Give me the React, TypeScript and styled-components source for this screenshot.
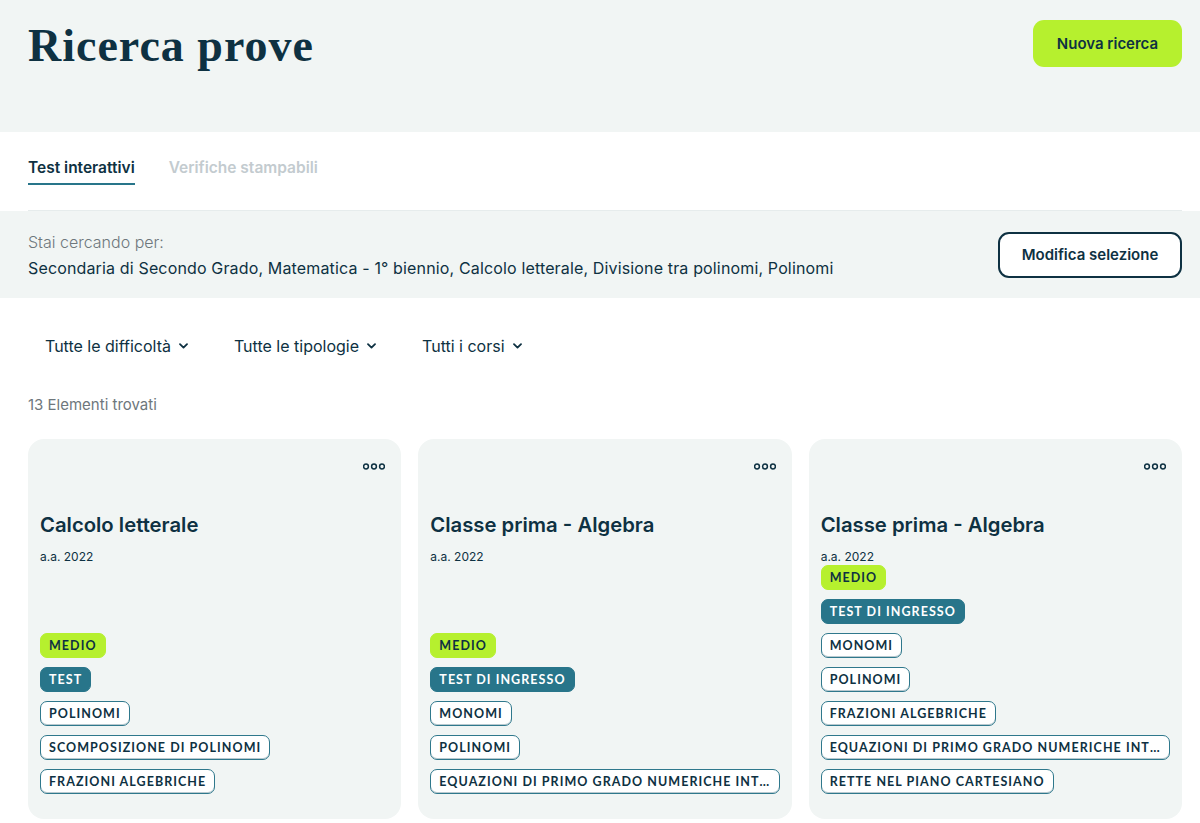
import React from "react";
import styled, { createGlobalStyle } from "styled-components";

const GlobalStyle = createGlobalStyle`
  * { box-sizing: border-box; }
  html, body { margin: 0; padding: 0; background: #ffffff; }
  body {
    font-family: "Inter", "Liberation Sans", sans-serif;
    color: #0e3142;
    -webkit-font-smoothing: antialiased;
  }
`;

const INK = "#0e3142";
const SOFT = "#f1f5f4";
const LIME = "#b6f02e";
const TEAL = "#28758a";

const Page = styled.div`
  width: 1200px;
  display: flex;
  flex-direction: column;
`;

const Header = styled.header`
  height: 132px;
  background: ${SOFT};
  padding: 20px 18px 0 28px;
  display: flex;
  justify-content: space-between;
  align-items: flex-start;
`;

const Title = styled.h1`
  margin: 0;
  padding-top: 1px;
  font-family: "Liberation Serif", "DejaVu Serif", serif;
  font-weight: 700;
  font-size: 46px;
  line-height: 50px;
  letter-spacing: 1px;
  color: ${INK};
`;

const PrimaryButton = styled.button`
  height: 47px;
  width: 149px;
  border: none;
  border-radius: 11px;
  background: ${LIME};
  color: ${INK};
  font-family: inherit;
  font-weight: 600;
  font-size: 15px;
  cursor: pointer;
`;

const TabsWrap = styled.div`
  padding: 0 18px 0 28px;
  background: #ffffff;
`;

const TabsRow = styled.nav`
  height: 79px;
  display: flex;
  align-items: flex-start;
  gap: 34px;
  padding-top: 26px;
  border-bottom: 1px solid #e6ecec;
`;

const Tab = styled.div<{ $active?: boolean }>`
  font-weight: 600;
  font-size: 15.5px;
  line-height: 20px;
  padding-bottom: 5px;
  color: ${(p) => (p.$active ? INK : "#c3cbcf")};
  border-bottom: 2px solid ${(p) => (p.$active ? TEAL : "transparent")};
`;

const SearchBar = styled.section`
  height: 87px;
  background: ${SOFT};
  padding: 0 18px 0 28px;
  display: flex;
  align-items: center;
  justify-content: space-between;
`;

const SearchText = styled.div`
  display: flex;
  flex-direction: column;
  gap: 6px;
  font-size: 16px;
  line-height: 20px;
`;

const SearchLabel = styled.span`
  color: #6e777c;
  font-weight: 300;
`;

const SearchValue = styled.span`
  color: ${INK};
  letter-spacing: 0.15px;
`;

const OutlineButton = styled.button`
  height: 46px;
  width: 184px;
  border: 2px solid ${INK};
  border-radius: 11px;
  background: #ffffff;
  color: ${INK};
  font-family: inherit;
  font-weight: 600;
  font-size: 15px;
  cursor: pointer;
`;

const Filters = styled.div`
  display: flex;
  gap: 12px;
  padding: 36px 18px 0 28px;
`;

const FilterButton = styled.button`
  display: flex;
  align-items: center;
  gap: 8px;
  padding: 0 17px;
  height: 24px;
  background: transparent;
  border: none;
  font-family: inherit;
  font-size: 16px;
  color: ${INK};
  cursor: pointer;
`;

const Count = styled.div`
  padding: 37px 28px 0;
  font-size: 15px;
  line-height: 20px;
  color: #6e777c;
`;

const Grid = styled.div`
  display: grid;
  grid-template-columns: repeat(3, 1fr);
  gap: 17px;
  padding: 24px 18px 0 28px;
`;

const Card = styled.article`
  background: ${SOFT};
  border-radius: 16px;
  padding: 20px 12px 25px;
  display: flex;
  flex-direction: column;
  min-width: 0;
`;

const CardTop = styled.div`
  display: flex;
  justify-content: flex-end;
  padding-right: 4px;
  height: 14px;
  align-items: center;
`;

const CardTitle = styled.h2`
  margin: 40px 0 0;
  font-size: 20.3px;
  line-height: 24px;
  font-weight: 600;
  color: ${INK};
`;

const Year = styled.div`
  margin-top: 12px;
  font-size: 12px;
  line-height: 16px;
  color: ${INK};
`;

const Tags = styled.div`
  margin-top: auto;
  display: flex;
  flex-direction: column;
  align-items: flex-start;
  gap: 9px;
`;

type TagKind = "level" | "type" | "topic";

const Tag = styled.span<{ $kind: TagKind }>`
  display: block;
  max-width: 100%;
  height: 25px;
  line-height: 23px;
  padding: 0 8px;
  border-radius: 7px;
  font-family: "Lato", "Liberation Sans", sans-serif;
  font-size: 12.5px;
  font-weight: 700;
  letter-spacing: 1.05px;
  text-transform: uppercase;
  white-space: nowrap;
  overflow: hidden;
  text-overflow: ellipsis;
  border: 1px solid
    ${(p) => (p.$kind === "level" ? LIME : p.$kind === "type" ? TEAL : "#2f788c")};
  background: ${(p) => (p.$kind === "level" ? LIME : p.$kind === "type" ? TEAL : "#ffffff")};
  color: ${(p) => (p.$kind === "type" ? "#ffffff" : INK)};
  box-shadow: ${(p) => (p.$kind === "topic" ? "inset 0 -1px 0 #b9c9cf" : "none")};
`;

const Dots = () => (
  <svg width="22" height="7" viewBox="0 0 22 7" fill="none">
    <circle cx="3" cy="3.5" r="2.4" stroke={INK} strokeWidth="1.5" />
    <circle cx="11" cy="3.5" r="2.4" stroke={INK} strokeWidth="1.5" />
    <circle cx="19" cy="3.5" r="2.4" stroke={INK} strokeWidth="1.5" />
  </svg>
);

const Chevron = () => (
  <svg width="9" height="6" viewBox="0 0 9 6" fill="none">
    <path d="M1 1.2 L4.5 4.6 L8 1.2" stroke={INK} strokeWidth="1.8" strokeLinecap="round" strokeLinejoin="round" />
  </svg>
);

type CardData = {
  title: string;
  level: string;
  type: string;
  topics: string[];
};

const cards: CardData[] = [
  {
    title: "Calcolo letterale",
    level: "Medio",
    type: "Test",
    topics: ["Polinomi", "Scomposizione di polinomi", "Frazioni algebriche"],
  },
  {
    title: "Classe prima - Algebra",
    level: "Medio",
    type: "Test di ingresso",
    topics: ["Monomi", "Polinomi", "Equazioni di primo grado numeriche intere"],
  },
  {
    title: "Classe prima - Algebra",
    level: "Medio",
    type: "Test di ingresso",
    topics: [
      "Monomi",
      "Polinomi",
      "Frazioni algebriche",
      "Equazioni di primo grado numeriche intere",
      "Rette nel piano cartesiano",
    ],
  },
];

export default function App() {
  return (
    <Page>
      <GlobalStyle />
      <Header>
        <Title>Ricerca prove</Title>
        <PrimaryButton>Nuova ricerca</PrimaryButton>
      </Header>
      <TabsWrap>
        <TabsRow>
          <Tab $active>Test interattivi</Tab>
          <Tab>Verifiche stampabili</Tab>
        </TabsRow>
      </TabsWrap>
      <SearchBar>
        <SearchText>
          <SearchLabel>Stai cercando per:</SearchLabel>
          <SearchValue>
            Secondaria di Secondo Grado, Matematica - 1° biennio, Calcolo letterale, Divisione tra polinomi, Polinomi
          </SearchValue>
        </SearchText>
        <OutlineButton>Modifica selezione</OutlineButton>
      </SearchBar>
      <Filters>
        <FilterButton>
          Tutte le difficoltà <Chevron />
        </FilterButton>
        <FilterButton>
          Tutte le tipologie <Chevron />
        </FilterButton>
        <FilterButton>
          Tutti i corsi <Chevron />
        </FilterButton>
      </Filters>
      <Count>13 Elementi trovati</Count>
      <Grid>
        {cards.map((c, i) => (
          <Card key={i}>
            <CardTop>
              <Dots />
            </CardTop>
            <CardTitle>{c.title}</CardTitle>
            <Year>a.a. 2022</Year>
            <Tags>
              <Tag $kind="level">{c.level}</Tag>
              <Tag $kind="type">{c.type}</Tag>
              {c.topics.map((t) => (
                <Tag key={t} $kind="topic">
                  {t}
                </Tag>
              ))}
            </Tags>
          </Card>
        ))}
      </Grid>
    </Page>
  );
}
